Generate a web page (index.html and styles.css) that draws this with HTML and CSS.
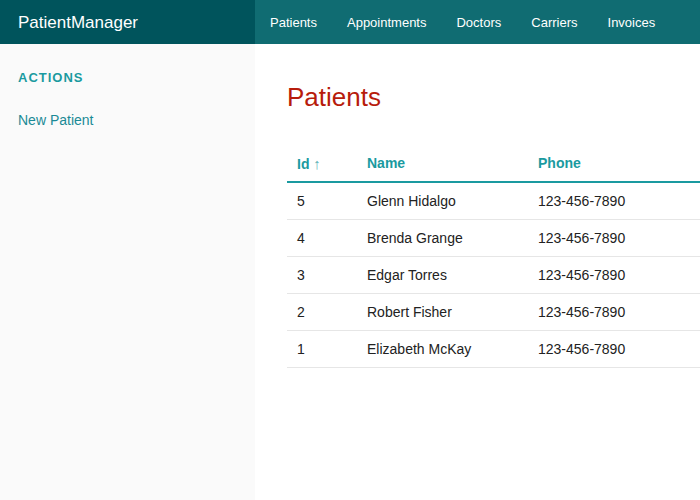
FILE: index.html
```html
<!DOCTYPE html>
<html>
<head>
<meta charset="utf-8">
<link rel="stylesheet" href="styles.css">
</head>
<body>
<header class="topbar">
  <div class="brand">PatientManager</div>
  <nav class="nav">
    <a class="nav-link">Patients</a>
    <a class="nav-link">Appointments</a>
    <a class="nav-link">Doctors</a>
    <a class="nav-link">Carriers</a>
    <a class="nav-link">Invoices</a>
  </nav>
</header>
<div class="layout">
  <aside class="sidebar">
    <div class="side-title">ACTIONS</div>
    <a class="side-link">New Patient</a>
  </aside>
  <main class="main">
    <h1 class="title">Patients</h1>
    <table class="grid">
      <thead>
        <tr><th class="c-id">Id <span class="arrow">↑</span></th><th class="c-name">Name</th><th class="c-phone">Phone</th></tr>
      </thead>
      <tbody>
        <tr><td>5</td><td>Glenn Hidalgo</td><td>123-456-7890</td></tr>
        <tr><td>4</td><td>Brenda Grange</td><td>123-456-7890</td></tr>
        <tr><td>3</td><td>Edgar Torres</td><td>123-456-7890</td></tr>
        <tr><td>2</td><td>Robert Fisher</td><td>123-456-7890</td></tr>
        <tr><td>1</td><td>Elizabeth McKay</td><td>123-456-7890</td></tr>
      </tbody>
    </table>
  </main>
</div>
</body>
</html>
```

FILE: styles.css
```css
html, body {
  margin: 0;
  padding: 0;
  height: 100%;
  overflow: hidden;
}
body {
  font-family: "Liberation Sans", Arial, sans-serif;
  background: #ffffff;
  color: #222;
}
.topbar {
  display: flex;
  height: 44px;
  background: #106c72;
}
.brand {
  width: 255px;
  flex: none;
  box-sizing: border-box;
  padding-left: 18px;
  background: #00545c;
  color: #fff;
  font-size: 17px;
  line-height: 46px;
}
.nav {
  display: flex;
  padding-left: 0;
}
.nav-link {
  color: #fff;
  font-size: 13px;
  line-height: 46px;
  padding: 0 15px;
}
.layout {
  display: flex;
  height: 456px;
}
.sidebar {
  width: 255px;
  flex: none;
  background: #fafafa;
  box-sizing: border-box;
  padding: 26px 18px;
}
.side-title {
  color: #1a9aa0;
  font-size: 13px;
  font-weight: bold;
  letter-spacing: 1px;
  line-height: 16px;
}
.side-link {
  display: block;
  margin-top: 26px;
  color: #1a8a96;
  font-size: 14px;
  line-height: 16px;
}
.main {
  flex: 1;
  padding-left: 32px;
  min-width: 0;
  overflow: hidden;
}
.title {
  margin: 36px 0 0;
  font-size: 26px;
  font-weight: normal;
  color: #b71c0c;
  line-height: 34px;
}
.grid {
  margin-top: 31px;
  border-collapse: collapse;
  width: 560px;
  font-size: 14px;
}
.grid th {
  text-align: left;
  color: #1a9aa0;
  font-weight: bold;
  height: 36px;
  padding: 0 10px;
  border-bottom: 2px solid #1a9aa0;
}
.arrow {
  font-weight: normal;
  color: #5fb3b8;
  font-size: 15px;
}
.grid td {
  height: 36px;
  padding: 0 10px;
  border-bottom: 1px solid #e6e6e6;
  color: #222;
}
.c-id { width: 50px; }
.c-name { width: 151px; }
```
